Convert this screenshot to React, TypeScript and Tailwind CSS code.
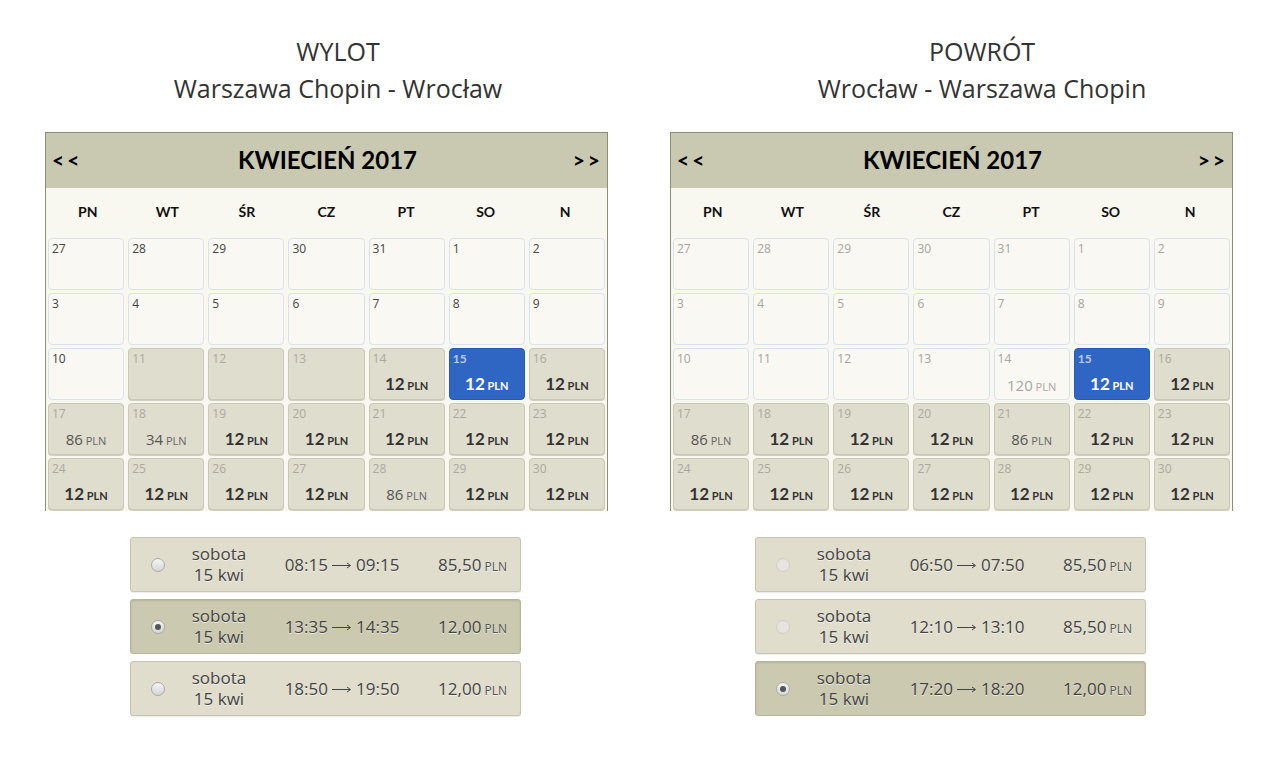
import React from "react";

type Cell = {
  d: number;
  k: "empty" | "none" | "price" | "sel" | "wprice";
  p?: string;
  bold?: boolean;
  light?: boolean;
};

const e = (d: number, light = false): Cell => ({ d, k: "empty", light });
const n = (d: number): Cell => ({ d, k: "none" });
const b = (d: number, p = "12"): Cell => ({ d, k: "price", p, bold: true });
const r = (d: number, p: string): Cell => ({ d, k: "price", p, bold: false });

const leftCells: Cell[] = [
  e(27), e(28), e(29), e(30), e(31), e(1), e(2),
  e(3), e(4), e(5), e(6), e(7), e(8), e(9),
  e(10), n(11), n(12), n(13), b(14), { d: 15, k: "sel", p: "12" }, b(16),
  r(17, "86"), r(18, "34"), b(19), b(20), b(21), b(22), b(23),
  b(24), b(25), b(26), b(27), r(28, "86"), b(29), b(30),
];

const rightCells: Cell[] = [
  e(27, true), e(28, true), e(29, true), e(30, true), e(31, true), e(1, true), e(2, true),
  e(3, true), e(4, true), e(5, true), e(6, true), e(7, true), e(8, true), e(9, true),
  e(10, true), e(11, true), e(12, true), e(13, true), { d: 14, k: "wprice", p: "120" }, { d: 15, k: "sel", p: "12" }, b(16),
  r(17, "86"), b(18), b(19), b(20), r(21, "86"), b(22), b(23),
  b(24), b(25), b(26), b(27), b(28), b(29), b(30),
];

const days = ["PN", "WT", "ŚR", "CZ", "PT", "SO", "N"];

const ubu = { fontFamily: "Lato, 'Open Sans', sans-serif" };
const os = { fontFamily: "'Open Sans', sans-serif" };

function DayCell({ c }: { c: Cell }) {
  if (c.k === "empty" || c.k === "wprice") {
    return (
      <div className="h-[52px] rounded-[4px] border border-[#d9e3ef] bg-[#f9f8f2] px-[3px] pt-[2px]">
        <div
          className={`text-[12px] leading-[16px] ${c.light || c.k === "wprice" ? "text-[#a5a5a0]" : "text-[#444]"}`}
          style={os}
        >
          {c.d}
        </div>
        {c.k === "wprice" && (
          <div className="mt-[9px] text-center leading-[18px] text-[#a8a8a4]" style={os}>
            <span className="text-[15px]">{c.p}</span>
            <span className="text-[11px]"> PLN</span>
          </div>
        )}
      </div>
    );
  }
  if (c.k === "sel") {
    return (
      <div className="h-[52px] rounded-[4px] border border-[#2a5cb3] bg-[#2f66c4] px-[3px] pt-[2px]">
        <div className="text-[12px] font-bold leading-[16px] text-[#b9c9e6]" style={ubu}>
          {c.d}
        </div>
        <div className="mt-[8px] text-center leading-[18px] text-white" style={ubu}>
          <span className="text-[17px] font-bold">{c.p}</span>
          <span className="text-[11px] font-bold"> PLN</span>
        </div>
      </div>
    );
  }
  return (
    <div className="h-[52px] rounded-[4px] border border-[#cac8b7] bg-[#dfddcd] px-[3px] pt-[2px] shadow-[0_1px_0_#d2d0bf]">
      <div className="text-[12px] leading-[16px] text-[#aaa9a0]" style={os}>
        {c.d}
      </div>
      {c.k === "price" &&
        (c.bold ? (
          <div className="mt-[8px] text-center leading-[18px] text-[#333]" style={ubu}>
            <span className="text-[17px] font-bold">{c.p}</span>
            <span className="text-[11px] font-bold"> PLN</span>
          </div>
        ) : (
          <div className="mt-[8px] text-center leading-[18px] text-[#555]" style={os}>
            <span className="text-[15px]">{c.p}</span>
            <span className="text-[11px] text-[#666]"> PLN</span>
          </div>
        ))}
    </div>
  );
}

function Calendar({ cells }: { cells: Cell[] }) {
  return (
    <div className="w-[563px] border-x border-t border-[#8e8e72] bg-[#f8f7f0]">
      <div className="flex h-[55px] items-center justify-between bg-[#c9c8b0] pb-[1px] pl-[6px] pr-[4px] text-black" style={ubu}>
        <span className="text-[21px] font-bold tracking-[3px]">&lt;&lt;</span>
        <span className="text-[24px] font-bold">KWIECIEŃ 2017</span>
        <span className="text-[21px] font-bold tracking-[3px]">&gt;&gt;</span>
      </div>
      <div className="grid h-[50px] grid-cols-7 items-center px-[2px] pb-[4px] text-center text-[14px] font-bold text-[#111]" style={ubu}>
        {days.map((d) => (
          <div key={d}>{d}</div>
        ))}
      </div>
      <div className="grid grid-cols-7 gap-x-[4px] gap-y-[3px] px-[2px] pb-[1px]">
        {cells.map((c, i) => (
          <DayCell key={i} c={c} />
        ))}
      </div>
    </div>
  );
}

type Flight = { from: string; to: string; price: string; sel: boolean };

function Radio({ checked, faded }: { checked: boolean; faded: boolean }) {
  return (
    <div
      className={`flex h-[14px] w-[14px] items-center justify-center rounded-full border ${
        faded && !checked ? "border-[#d0cfc6] bg-[#e6e5dd]" : "border-[#a9a9a9] bg-gradient-to-b from-[#f4f4f4] to-[#d6d6d6]"
      }`}
    >
      {checked && <div className="h-[6px] w-[6px] rounded-full bg-[#555]" />}
    </div>
  );
}

function Arrow() {
  return (
    <svg width="20" height="10" viewBox="0 0 20 10" className="mx-[4px] inline-block align-middle">
      <path d="M0 5.5 H18" stroke="#444" strokeWidth="1" />
      <path d="M15 3 L18.5 5.5 L15 8" fill="none" stroke="#444" strokeWidth="1" />
    </svg>
  );
}

function FlightList({ flights, faded }: { flights: Flight[]; faded: boolean }) {
  return (
    <div className="flex w-[391px] flex-col gap-[7px]" style={os}>
      {flights.map((f, i) => (
        <div
          key={i}
          className={`flex h-[55px] items-center rounded-[3px] border text-[#444] [text-shadow:0_1px_0_rgba(255,255,255,0.6)] ${
            f.sel
              ? "border-[#b6b59a] bg-[#cbcab0] shadow-[inset_0_1px_2px_rgba(0,0,0,0.12)]"
              : "border-[#c6c4b2] bg-[#e0ddcc] shadow-[0_1px_1px_rgba(0,0,0,0.08)]"
          }`}
        >
          <div className="flex w-[34px] justify-end">
            <Radio checked={f.sel} faded={faded} />
          </div>
          <div className="w-[108px] pb-[1px] text-center text-[17px] leading-[21px]">
            <div>sobota</div>
            <div>15 kwi</div>
          </div>
          <div className="flex w-[138px] items-center justify-center text-[17px]">
            <span>{f.from}</span>
            <Arrow />
            <span>{f.to}</span>
          </div>
          <div className="flex-1 pr-[13px] text-right">
            <span className="text-[17px]">{f.price}</span>
            <span className="text-[12px] text-[#555]"> PLN</span>
          </div>
        </div>
      ))}
    </div>
  );
}

function Column({
  title,
  route,
  titleMl,
  cells,
  flights,
  faded,
}: {
  title: string;
  route: string;
  titleMl: string;
  cells: Cell[];
  flights: Flight[];
  faded: boolean;
}) {
  return (
    <div className="flex w-[625px] flex-col">
      <div className={`w-[400px] ${titleMl} pt-[33px] text-center text-[25px] leading-[37px] text-[#333]`} style={os}>
        <div>{title}</div>
        <div>{route}</div>
      </div>
      <div className="ml-[45px] mt-[25px]">
        <Calendar cells={cells} />
      </div>
      <div className="ml-[130px] mt-[26px]">
        <FlightList flights={flights} faded={faded} />
      </div>
    </div>
  );
}

export default function App() {
  return (
    <div className="h-[775px] w-[1285px] bg-white">
      <div className="flex">
        <Column
          title="WYLOT"
          route="Warszawa Chopin - Wrocław"
          titleMl="ml-[138px]"
          cells={leftCells}
          faded={false}
          flights={[
            { from: "08:15", to: "09:15", price: "85,50", sel: false },
            { from: "13:35", to: "14:35", price: "12,00", sel: true },
            { from: "18:50", to: "19:50", price: "12,00", sel: false },
          ]}
        />
        <Column
          title="POWRÓT"
          route="Wrocław - Warszawa Chopin"
          titleMl="ml-[157px]"
          cells={rightCells}
          faded={true}
          flights={[
            { from: "06:50", to: "07:50", price: "85,50", sel: false },
            { from: "12:10", to: "13:10", price: "85,50", sel: false },
            { from: "17:20", to: "18:20", price: "12,00", sel: true },
          ]}
        />
      </div>
    </div>
  );
}
